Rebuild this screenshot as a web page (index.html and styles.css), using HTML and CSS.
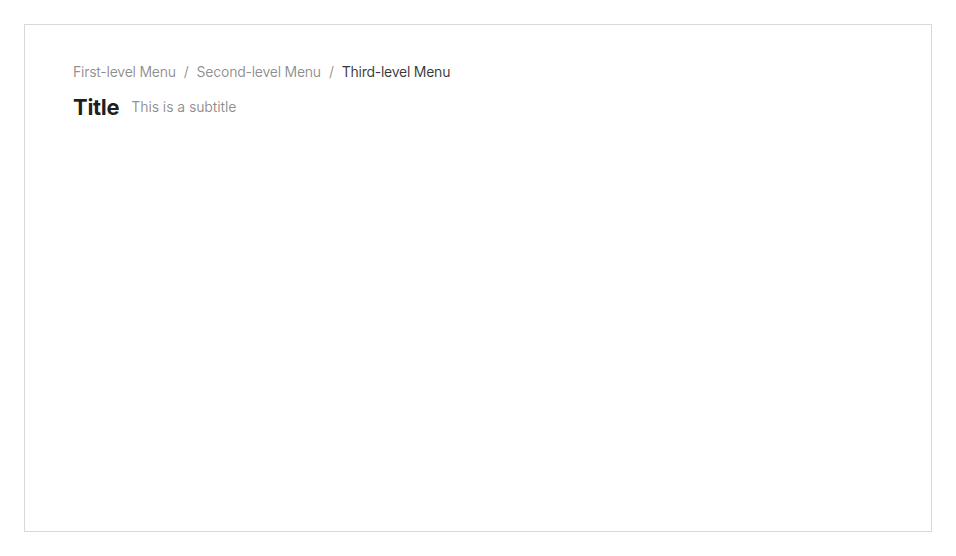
FILE: index.html
```html
<!DOCTYPE html>
<html>
<head>
<meta charset="utf-8">
<link rel="stylesheet" href="styles.css">
</head>
<body>
<div class="frame">
  <div class="page-header">
    <nav class="breadcrumb">
      <span class="crumb">First-level Menu</span>
      <span class="sep">/</span>
      <span class="crumb">Second-level Menu</span>
      <span class="sep">/</span>
      <span class="crumb current">Third-level Menu</span>
    </nav>
    <div class="heading">
      <span class="title">Title</span>
      <span class="subtitle">This is a subtitle</span>
    </div>
  </div>
</div>
</body>
</html>
```
FILE: styles.css
```css
html, body {
  margin: 0;
  padding: 0;
  background: #fff;
}
body {
  padding: 24px;
  box-sizing: border-box;
  height: 556px;
  font-family: Inter, "Noto Sans", sans-serif;
}
.frame {
  box-sizing: border-box;
  height: 508px;
  border: 1px solid #d9d9d9;
  padding: 36px 48px;
}
.breadcrumb {
  display: flex;
  align-items: center;
  font-size: 14px;
  line-height: 22px;
  letter-spacing: -0.25px;
  color: rgba(0, 0, 0, 0.45);
}
.sep {
  margin: 0 8px;
}
.current {
  color: rgba(0, 0, 0, 0.78);
}
.heading {
  display: flex;
  align-items: center;
  margin-top: 8px;
}
.title {
  font-size: 22px;
  line-height: 32px;
  font-weight: 700;
  letter-spacing: -0.3px;
  color: rgba(0, 0, 0, 0.88);
  margin-right: 12px;
}
.subtitle {
  font-size: 14px;
  line-height: 22px;
  letter-spacing: -0.1px;
  color: rgba(0, 0, 0, 0.45);
}
```
